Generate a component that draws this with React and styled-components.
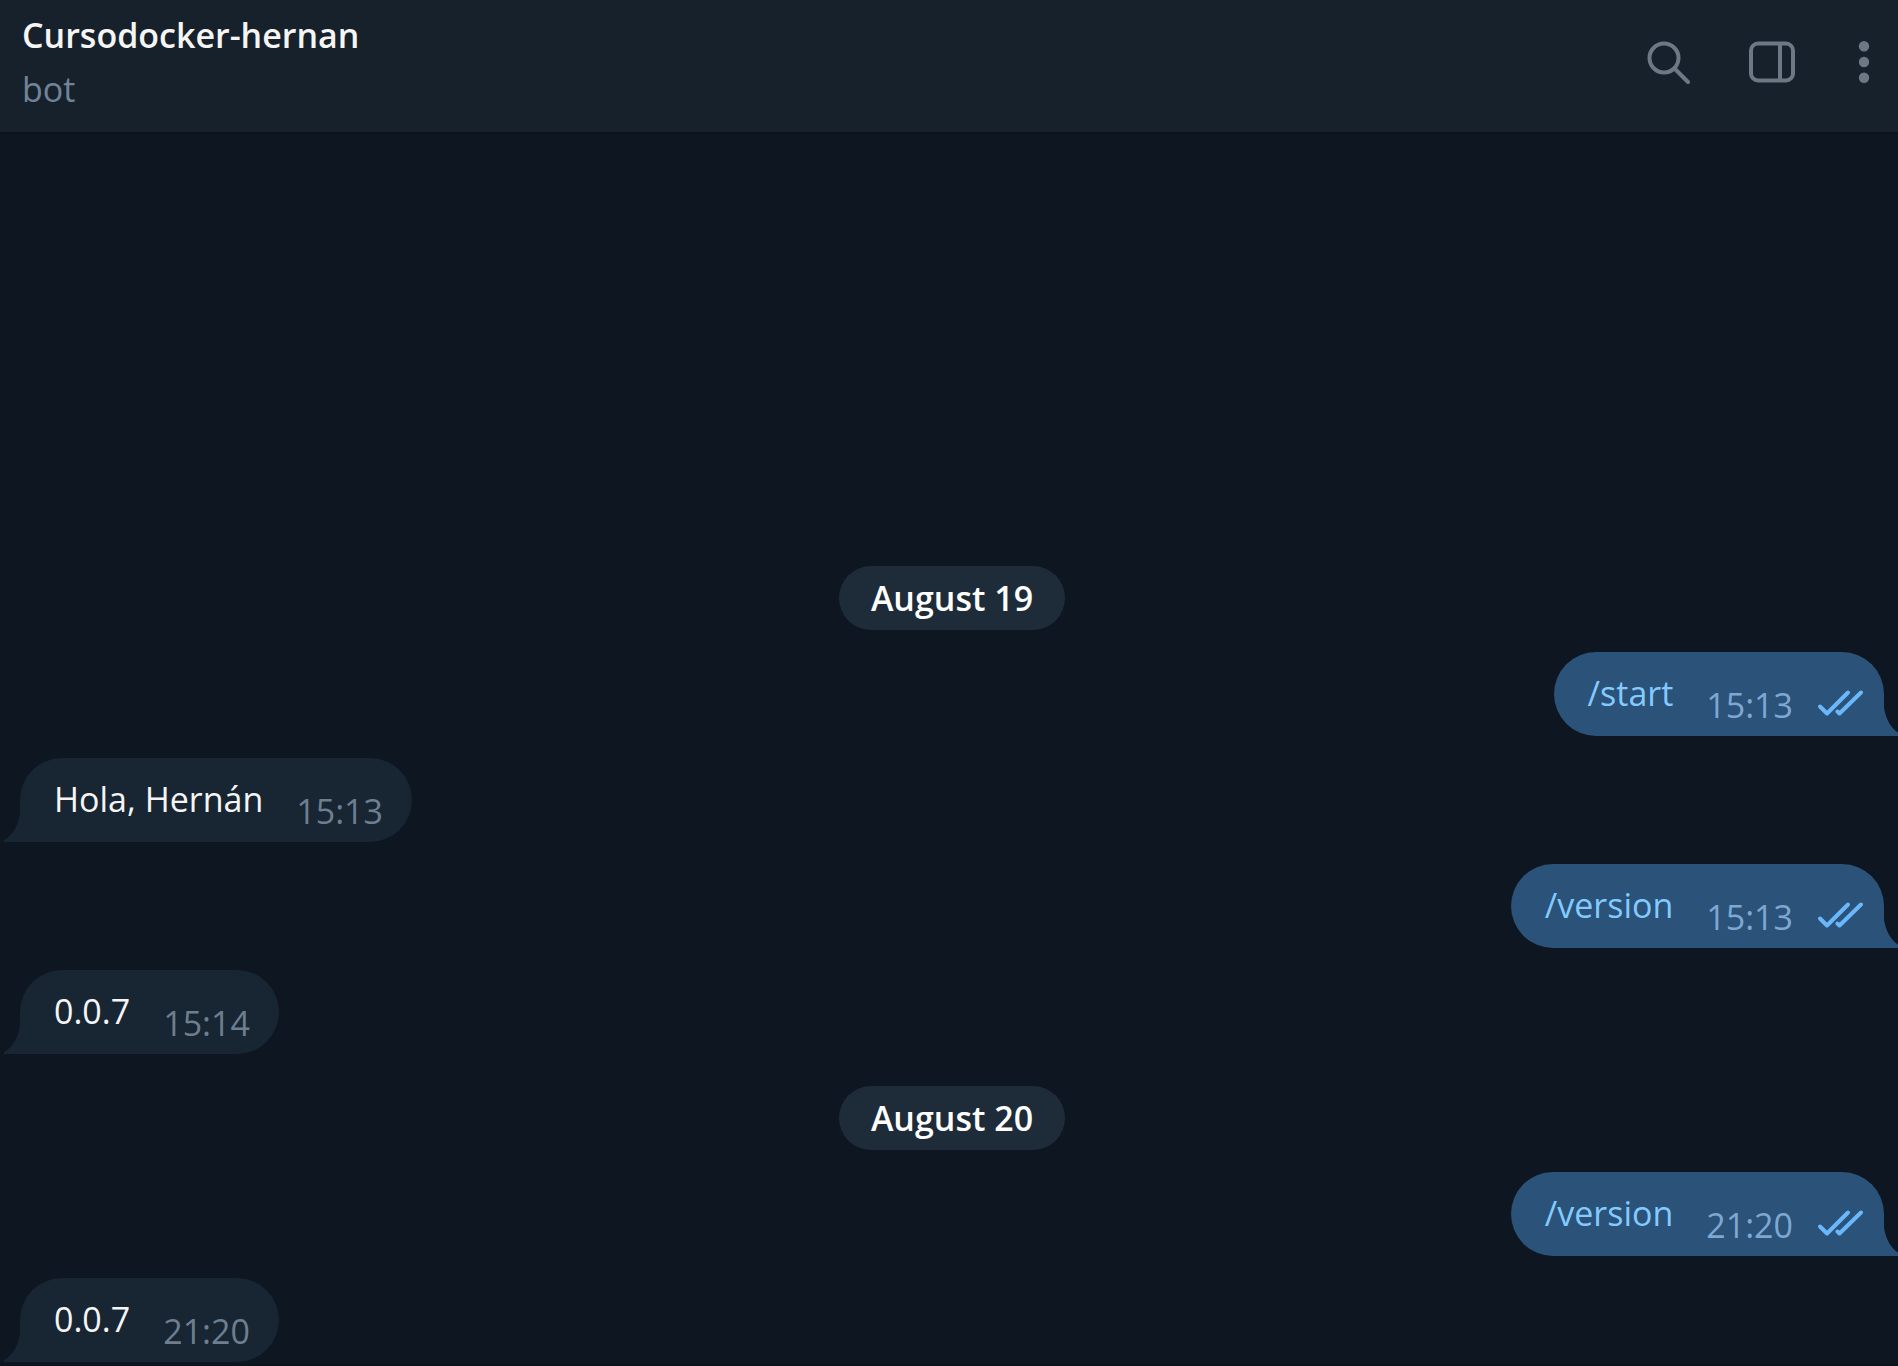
import React from "react";
import styled, { createGlobalStyle, css } from "styled-components";

const GlobalStyle = createGlobalStyle`
  *, *::before, *::after { box-sizing: border-box; }
  body {
    margin: 0;
    background: #0e1621;
    color: #f5f5f5;
    font-family: "Open Sans", "Noto Sans", sans-serif;
    font-size: 34px;
    line-height: 46px;
  }
`;

const Window = styled.div`
  display: flex;
  flex-direction: column;
  min-height: 100vh;
  overflow: hidden;
`;

const Header = styled.header`
  display: flex;
  align-items: center;
  justify-content: space-between;
  padding: 12px 22px 20px;
  background: #17212b;
  box-shadow: 0 2px 0 #0c131c;
`;

const Peer = styled.div`
  display: flex;
  flex-direction: column;
  gap: 8px;
`;

const PeerName = styled.h1`
  margin: 0;
  font-size: 34px;
  font-weight: 600;
  line-height: 46px;
`;

const PeerStatus = styled.span`
  color: #708499;
`;

const Actions = styled.div`
  display: flex;
  gap: 57px;
`;

const IconButton = styled.button`
  display: flex;
  padding: 0;
  border: 0;
  background: none;
  color: #6c7883;
  cursor: pointer;
`;

const History = styled.main`
  flex: 1;
  display: flex;
  flex-direction: column;
  justify-content: flex-end;
  gap: 32px;
  padding: 32px 14px 2px 20px;
  border-bottom: 2px solid #0c131c;
`;

const Day = styled.section`
  display: flex;
  flex-direction: column;
  align-items: flex-start;
  gap: 22px;
`;

const DayLabel = styled.h2`
  align-self: center;
  margin: 0;
  padding: 9px 32px;
  border-radius: 32px;
  background: #1e2c3a;
  color: #ffffff;
  font-size: 34px;
  font-weight: 600;
  line-height: 46px;
`;

const Bubble = styled.article`
  position: relative;
  display: flex;
  align-items: flex-end;
  padding: 18px 29px 8px 34px;
  border-radius: 42px 42px 42px 0;
  background: #182533;
  color: #182533;

  ${({ $out }) =>
    $out &&
    css`
      align-self: flex-end;
      padding-right: 21px;
      border-radius: 42px 42px 0 42px;
      background: #2b5278;
      color: #2b5278;
    `}
`;

const Tail = styled.svg`
  position: absolute;
  bottom: 0;
  ${({ $out }) => ($out ? "left: 100%; transform: scaleX(-1);" : "right: 100%;")}
`;

const Text = styled.span`
  margin: 0 33px 12px 0;
  color: #f5f5f5;
`;

const Command = styled.a`
  color: #83caff;
  text-decoration: none;
`;

const Time = styled.time`
  color: ${({ $out }) => ($out ? "#7da8d3" : "#6d7f8f")};
`;

const Checks = styled.svg`
  margin: 0 0 11px 24px;
  color: #6ab8fb;
`;

const days = [
  {
    label: "August 19",
    messages: [
      { out: true, text: "/start", time: "15:13" },
      { text: "Hola, Hernán", time: "15:13" },
      { out: true, text: "/version", time: "15:13" },
      { text: "0.0.7", time: "15:14" },
    ],
  },
  {
    label: "August 20",
    messages: [
      { out: true, text: "/version", time: "21:20" },
      { text: "0.0.7", time: "21:20" },
    ],
  },
];

function Message({ out, text, time }) {
  return (
    <Bubble $out={out}>
      <Text>{out ? <Command href="#command">{text}</Command> : text}</Text>
      <Time $out={out}>{time}</Time>
      {out && (
        <Checks width="46" height="28" viewBox="0 0 46 28" fill="none" stroke="currentColor" strokeWidth="4" strokeLinecap="round" strokeLinejoin="round" role="img" aria-label="Read">
          <path d="M3 17.5L10 24.5L31 3.5" />
          <path d="M20.500 22.500L22.500 24.500L44 3.500" />
        </Checks>
      )}
      <Tail $out={out} width="16" height="28" viewBox="0 0 16 28" fill="currentColor" aria-hidden="true">
        <path d="M16 0C14 11 9 21 0 26V28H16Z" />
      </Tail>
    </Bubble>
  );
}

export default function App() {
  return (
    <Window>
      <GlobalStyle />
      <Header>
        <Peer>
          <PeerName>Cursodocker-hernan</PeerName>
          <PeerStatus>bot</PeerStatus>
        </Peer>
        <Actions>
          <IconButton aria-label="Search">
            <svg width="46" height="44" viewBox="0 0 46 44" fill="none" stroke="currentColor" strokeWidth="4" strokeLinecap="round">
              <circle cx="18" cy="18" r="14.500" />
              <path d="M28.500 28.500L42 42" />
            </svg>
          </IconButton>
          <IconButton aria-label="Toggle info panel">
            <svg width="46" height="44" viewBox="0 0 46 44" fill="none" stroke="currentColor" strokeWidth="4">
              <rect x="2" y="3.500" width="42" height="37" rx="7" />
              <path d="M31 4V40" />
            </svg>
          </IconButton>
          <IconButton aria-label="More">
            <svg width="24" height="44" viewBox="0 0 24 44" fill="currentColor">
              <circle cx="12" cy="6.300" r="5.200" />
              <circle cx="12" cy="22" r="5.200" />
              <circle cx="12" cy="37.700" r="5.200" />
            </svg>
          </IconButton>
        </Actions>
      </Header>
      <History>
        {days.map((day) => (
          <Day key={day.label}>
            <DayLabel>{day.label}</DayLabel>
            {day.messages.map((message, index) => (
              <Message key={index} {...message} />
            ))}
          </Day>
        ))}
      </History>
    </Window>
  );
}
